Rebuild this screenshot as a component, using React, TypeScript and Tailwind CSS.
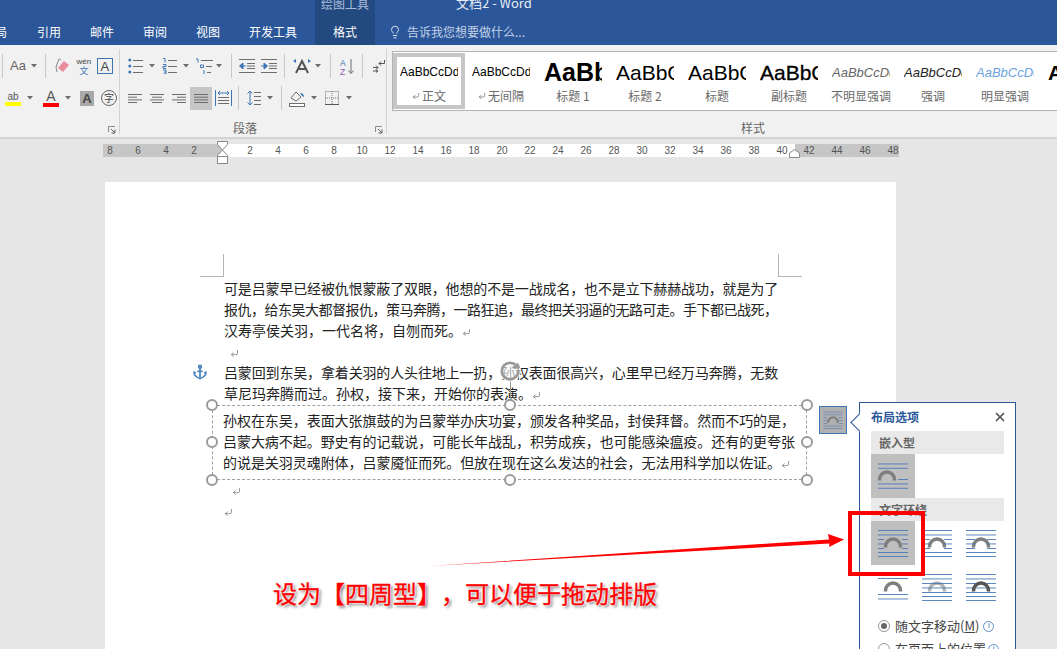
import { Anchor, CornerDownLeft, Lightbulb, RotateCw, X } from 'lucide-react'

const BLUE = '#3f75b5'
const GRAY = '#6d6d6d'

type Line = [number, number, number]

// horizontal-line glyphs: alignment, lists, indents
function Lines({ w, h = 16, lines, color = GRAY, className = '' }: { w: number; h?: number; lines: Line[]; color?: string; className?: string }) {
  return (
    <svg width={w} height={h} viewBox={`0 0 ${w} ${h}`} className={`shrink-0 ${className}`}>
      {lines.map(([a, b, y], i) => (
        <rect key={i} x={a} y={y} width={b - a} height={1} fill={color} />
      ))}
    </svg>
  )
}

function Caret({ className = '' }: { className?: string }) {
  return (
    <svg width="6" height="4" viewBox="0 0 6 4" className={`shrink-0 ${className}`}>
      <path d="M0 0h6L3 3.5z" fill={GRAY} />
    </svg>
  )
}

function Sep({ className = '' }: { className?: string }) {
  return <div className={`h-[24px] w-px shrink-0 bg-[#c8c8c8] ${className}`} />
}

function Launcher({ className = '' }: { className?: string }) {
  return (
    <svg width="8" height="8" viewBox="0 0 8 8" className={className}>
      <path d="M.5 6V.5H7" fill="none" stroke="#8a8a8a" />
      <path d="M3 3l3.5 3.5M7 3.5V7H3.5" fill="none" stroke="#5c5c5c" />
    </svg>
  )
}

function Bullets() {
  return (
    <svg width="16" height="16" viewBox="0 0 16 16" className="shrink-0">
      <circle cx="1.8" cy="2" r="1.5" fill={BLUE} />
      <circle cx="1.8" cy="8" r="1.5" fill={BLUE} />
      <circle cx="1.8" cy="14" r="1.5" fill={BLUE} />
      <path d="M5 2.500h10M5 8.500h10M5 14.500h10" stroke={GRAY} />
    </svg>
  )
}

function Numbers() {
  return (
    <svg width="16" height="16" viewBox="0 0 16 16" className="shrink-0">
      <path d="M1 .5h2v4M1 6.500h3v2H1v2h3M1 12h3v4H1M2 14h2" fill="none" stroke={BLUE} />
      <path d="M6 2.500h9M6 8.500h9M6 14.500h9" stroke={GRAY} />
    </svg>
  )
}

function Multilevel() {
  return (
    <svg width="18" height="16" viewBox="0 0 18 16" className="shrink-0">
      <path d="M1 1h2v3.500M5.500 7h3v2.500h-3V7M9 12v4" fill="none" stroke={BLUE} />
      <path d="M6 2.500h12M11 8.500h6M12 14.500h4" stroke={GRAY} />
    </svg>
  )
}

function Indent({ flip }: { flip?: boolean }) {
  return (
    <svg width="16" height="14" viewBox="0 0 16 14" className="shrink-0">
      <path d="M0 .5h16M0 13.500h16M8 4.500h8M8 7h8M8 9.500h8" stroke={GRAY} />
      {flip ? <path d="M0 7h5M3 4l3.500 3L3 10z" fill={BLUE} stroke={BLUE} /> : <path d="M1 7h6M4 4L.5 7 4 10z" fill={BLUE} stroke={BLUE} />}
    </svg>
  )
}

function AsianLayout() {
  return (
    <svg width="20" height="16" viewBox="0 0 20 16" className="shrink-0">
      <path d="M4 15L10 3l6 12M6 11h8" fill="none" stroke="#555" strokeWidth="2" />
      <path d="M1 3l3-2v4zM19 3l-3-2v4z" fill={BLUE} />
    </svg>
  )
}

function SortIcon() {
  return (
    <svg width="15" height="17" viewBox="0 0 15 17" className="shrink-0">
      <text x="0" y="7.500" fontSize="8.500" fill={BLUE} fontFamily="Liberation Sans">A</text>
      <text x="0" y="16.500" fontSize="8.500" fill="#8e5bb5" fontFamily="Liberation Sans">Z</text>
      <path d="M11 1v14M8.500 12.500L11 15.500l2.500-3" fill="none" stroke={GRAY} />
    </svg>
  )
}

function Direction() {
  return (
    <svg width="12" height="14" viewBox="0 0 12 14" className="shrink-0">
      <path d="M11.500 1v3.500H6M8 2.500L6 4.500l2 2M0 8.500h5M3 6.500l2 2-2 2M0 12h5M3 10.500l2 1.500-2 1.500" fill="none" stroke="#555" />
    </svg>
  )
}

function Distributed() {
  return (
    <svg width="17" height="16" viewBox="0 0 17 16" className="ml-[3px] shrink-0">
      <path d="M.5 0v16M16.500 0v16" stroke={BLUE} />
      <path d="M3 3h11M5 1L3 3l2 2M12 1l2 2-2 2" fill="none" stroke={BLUE} />
      <path d="M3 7.500h11M3 10.500h11M3 13.500h11" stroke={GRAY} />
    </svg>
  )
}

function LineSpacing() {
  return (
    <svg width="14" height="16" viewBox="0 0 14 16" className="shrink-0">
      <path d="M3 1v14M.5 3.500L3 1l2.500 2.500M.5 12.500L3 15l2.500-2.500" fill="none" stroke={BLUE} />
      <path d="M7 2.500h7M7 6.500h7M7 10.500h7M7 14.500h7" stroke={GRAY} />
    </svg>
  )
}

function Shading() {
  return (
    <svg width="17" height="17" viewBox="0 0 17 17" className="shrink-0">
      <path d="M2 8l5-6 5 5-5 4z" fill="none" stroke={GRAY} />
      <path d="M11 3c3 0 4 2 4 4l-2-1z" fill={BLUE} />
      <rect x="0.5" y="13.500" width="15" height="3" fill="#fff" stroke={GRAY} />
    </svg>
  )
}

function Borders() {
  return (
    <svg width="14" height="14" viewBox="0 0 14 14" className="shrink-0">
      <rect x=".5" y=".5" width="13" height="13" fill="none" stroke="#777" strokeDasharray="1 1" />
      <path d="M7 0v14M0 7h14" stroke="#777" strokeDasharray="1 1" />
      <path d="M0 13.500h14" stroke="#555" />
    </svg>
  )
}

function Eraser() {
  return (
    <svg width="15" height="16" viewBox="0 0 15 16" className="shrink-0">
      <path d="M2 14L1 9l3-8 2 1" fill="none" stroke="#888" />
      <path d="M3 10l6-7 5 4-6 7z" fill="#e98d9c" />
    </svg>
  )
}

type Wrap = 'inline' | 'square' | 'tight' | 'through' | 'topbottom' | 'behind' | 'front'

// one tile of the layout options: blue text lines and a gray arch
function WrapIcon({ kind, size = 44 }: { kind: Wrap; size?: number }) {
  const full: number[] = kind === 'topbottom' ? [13, 29, 33.5] : kind === 'inline' ? [9.5, 13.8, 29.5, 33.8] : kind === 'behind' || kind === 'front' ? [9, 13.5, 18, 22.5, 27, 31, 35] : [9, 13.5, 31, 35]
  const side: number[] = ['square', 'tight', 'through'].includes(kind) ? [18, 22.5, 27] : []
  const sideW = kind === 'square' ? 6 : kind === 'tight' ? 8 : 9
  const archColor = kind === 'behind' ? '#b3b3b3' : kind === 'front' ? '#555' : '#7f7f7f'
  const cx = kind === 'inline' ? 16 : 22
  const arch = <path d={`M${cx - 7.5} 26.500v-1a7.500 7.500 0 0 1 15 0v1`} fill="none" stroke={archColor} strokeWidth="3.500" />
  return (
    <svg width={size} height={size} viewBox="0 0 44 44" className="shrink-0">
      {kind !== 'front' && arch}
      {full.map((y) => (
        <rect key={y} x="7" y={y} width="30" height="0.9" fill="#4a7ab5" />
      ))}
      {side.map((y) => (
        <g key={y} fill="#4a7ab5">
          <rect x="7" y={y} width={sideW} height="0.9" />
          <rect x={37 - sideW} y={y} width={sideW} height="0.9" />
        </g>
      ))}
      {kind === 'inline' && <rect x="27" y="25" width="10" height="0.9" fill="#4a7ab5" />}
      {kind === 'front' && arch}
    </svg>
  )
}

function FontGroup() {
  return (
    <div className="flex w-[120px] shrink-0 flex-col border-r border-[#d2d2d2] pt-[4px]">
      <div className="flex h-[26px] items-center">
        <Sep className="ml-[2px]" />
        <span className="ml-[7px] font-['Liberation_Sans',sans-serif] text-[13px] text-[#666]">Aa</span>
        <Caret className="ml-[5px]" />
        <Sep className="ml-[8px]" />
        <div className="ml-[9px]"><Eraser /></div>
        <div className="ml-[6px] flex w-[16px] flex-col items-center leading-none">
          <span className="font-['Liberation_Sans',sans-serif] text-[8px] leading-[9px] text-[#444]">wén</span>
          <span className="text-[9px] leading-[9px] text-[#3f75b5]">文</span>
        </div>
        <div className="ml-[5px] flex h-[16px] w-[16px] items-center justify-center border border-[#3f75b5]"><span className="font-['Liberation_Sans',sans-serif] text-[13px] leading-none text-[#444]">A</span></div>
      </div>
      <div className="mt-[7px] flex h-[24px] items-center">
        <div className="ml-[5px] flex w-[16px] flex-col items-center">
          <span className="font-['Liberation_Sans',sans-serif] text-[10px] leading-[11px] text-[#555]">ab</span>
          <div className="h-[4px] w-[16px] bg-[#ffff00]" />
        </div>
        <Caret className="ml-[6px]" />
        <div className="ml-[10px] flex w-[16px] flex-col items-center">
          <span className="font-['Liberation_Sans',sans-serif] text-[14px] leading-[13px] text-[#555]">A</span>
          <div className="h-[4px] w-[16px] bg-[#ff0000]" />
        </div>
        <Caret className="ml-[6px]" />
        <div className="ml-[9px] flex h-[15px] w-[14px] items-center justify-center bg-[#a8a8a8]"><span className="font-['Liberation_Sans',sans-serif] text-[13px] font-bold leading-none text-[#444]">A</span></div>
        <div className="ml-[7px] flex h-[16px] w-[16px] items-center justify-center rounded-full border border-[#666] text-[10px] leading-none text-[#444]">字</div>
      </div>
      <div className="mt-auto flex justify-end pr-[3px]"><Launcher /></div>
    </div>
  )
}

function ParagraphGroup() {
  return (
    <div className="relative flex w-[267px] shrink-0 flex-col border-r border-[#d2d2d2] pt-[4px]">
      <div className="flex h-[26px] items-center">
        <div className="ml-[8px]"><Bullets /></div>
        <Caret className="ml-[5px]" />
        <div className="ml-[7px]"><Numbers /></div>
        <Caret className="ml-[5px]" />
        <div className="ml-[6px]"><Multilevel /></div>
        <Caret className="ml-[3px]" />
        <Sep className="ml-[9px]" />
        <div className="ml-[7px]"><Indent /></div>
        <div className="ml-[6px]"><Indent flip /></div>
        <Sep className="ml-[7px]" />
        <div className="ml-[7px]"><AsianLayout /></div>
        <Caret className="ml-[3px]" />
        <Sep className="ml-[9px]" />
        <div className="ml-[9px]"><SortIcon /></div>
        <Sep className="ml-[7px]" />
        <div className="ml-[10px]"><Direction /></div>
      </div>
      <div className="mt-[7px] flex h-[24px] items-center">
        <Lines className="ml-[8px]" w={14} h={9} lines={[[0, 14, 0], [0, 9, 2.7], [0, 14, 5.4], [0, 9, 8]]} />
        <Lines className="ml-[8px]" w={14} h={9} lines={[[0, 14, 0], [2, 12, 2.7], [0, 14, 5.4], [2, 12, 8]]} />
        <Lines className="ml-[8px]" w={14} h={9} lines={[[0, 14, 0], [5, 14, 2.7], [0, 14, 5.4], [5, 14, 8]]} />
        <div className="ml-[4px] flex h-[23px] w-[22px] items-center justify-center bg-[#c6c6c6]">
          <Lines w={14} h={9} lines={[[0, 14, 0], [0, 14, 2.7], [0, 14, 5.4], [0, 14, 8]]} />
        </div>
        <Distributed />
        <Sep className="ml-[6px]" />
        <div className="ml-[8px]"><LineSpacing /></div>
        <Caret className="ml-[6px]" />
        <Sep className="ml-[8px]" />
        <div className="ml-[7px]"><Shading /></div>
        <Caret className="ml-[5px]" />
        <div className="ml-[8px]"><Borders /></div>
        <Caret className="ml-[7px]" />
      </div>
      <div className="mt-auto flex items-end justify-between pl-[113px] pr-[3px]">
        <span className="-mb-[2px] text-[12px] leading-[16px] text-[#666]">段落</span>
        <Launcher />
      </div>
    </div>
  )
}

const styles = [
  { name: '正文', sample: 'AaBbCcDd', cls: 'text-[12px] text-black', mark: true, selected: true },
  { name: '无间隔', sample: 'AaBbCcDd', cls: 'text-[12px] text-black', mark: true },
  { name: '标题 1', sample: 'AaBb', cls: 'text-[25px] font-bold text-black' },
  { name: '标题 2', sample: 'AaBbC', cls: 'text-[21px] text-black' },
  { name: '标题', sample: 'AaBbC', cls: 'text-[21px] text-black' },
  { name: '副标题', sample: 'AaBbC', cls: 'text-[21px] text-black [-webkit-text-stroke:0.3px_black]' },
  { name: '不明显强调', sample: 'AaBbCcDd', cls: 'text-[13px] italic text-[#666]' },
  { name: '强调', sample: 'AaBbCcDd', cls: 'text-[13px] italic text-[#222]' },
  { name: '明显强调', sample: 'AaBbCcDd', cls: 'text-[13px] italic text-[#6ba3e0]' },
  { name: '', sample: 'AaBbC', cls: 'text-[21px] font-bold text-black' },
]

function StylesGroup() {
  return (
    <div className="flex min-w-0 flex-1 flex-col pl-[5px] pt-[2px]">
      <div className="flex h-[60px] overflow-hidden border-y border-l border-[#b4b4b4] bg-white pt-px">
        {styles.map((s, i) => (
          <div key={i} className={`flex h-[56px] w-[72px] shrink-0 flex-col items-center border-4 ${s.selected ? 'border-[#c6c6c6]' : 'border-transparent'}`}>
            <div className="flex h-[30px] w-[58px] items-center justify-start overflow-hidden">
              <span className={`whitespace-nowrap font-['Liberation_Sans',sans-serif] leading-none ${s.cls}`}>{s.sample}</span>
            </div>
            <div className="mt-[1px] flex h-[16px] items-center gap-[2px] whitespace-nowrap text-[12px] leading-none text-[#6a6a6a]">
              {s.mark && <CornerDownLeft size={8} color="#666" />}
              {s.name}
            </div>
          </div>
        ))}
      </div>
      <div className="-mb-[2px] mt-auto pl-[349px] text-[12px] leading-[16px] text-[#666]">样式</div>
    </div>
  )
}

function Ruler() {
  const left = [8, 6, 4, 2]
  const mid = Array.from({ length: 20 }, (_, i) => (i + 1) * 2)
  const right = [42, 44, 46, 48]
  const cell = 'w-[28px] shrink-0 text-center'
  return (
    <div className="flex h-[13px] pl-[103px] font-['Liberation_Sans',sans-serif] text-[10px] leading-[13px] text-[#555]">
      <div className="flex w-[119px] shrink-0 justify-end bg-[#c6c6c6] pr-[14px]">
        {left.map((n) => <span key={n} className={cell}>{n}</span>)}
      </div>
      <div className="relative flex w-[573px] shrink-0 bg-white pl-[14px]">
        {mid.map((n) => <span key={n} className={cell}>{n}</span>)}
        <svg width="13" height="25" viewBox="0 0 13 25" className="absolute -left-[6px] -top-[3px]">
          <path d="M1.500.5h10v3L6.500 9l-5-5.500z" fill="#fff" stroke="#888" />
          <path d="M6.500 9l5 5.500v1h-10v-1z" fill="#fff" stroke="#888" />
          <rect x="1.500" y="15.500" width="10" height="7" fill="#fff" stroke="#888" />
        </svg>
        <svg width="11" height="9" viewBox="0 0 11 9" className="absolute -right-[5px] top-[5px]">
          <path d="M.5 8.500V4l5-3.500 5 3.500v4.500z" fill="#fff" stroke="#888" />
        </svg>
      </div>
      <div className="flex w-[104px] shrink-0 bg-[#c6c6c6]">
        {right.map((n) => <span key={n} className={cell}>{n}</span>)}
      </div>
    </div>
  )
}

function Mark({ className = '' }: { className?: string }) {
  return <CornerDownLeft size={9} color="#777" className={`inline-block ${className}`} />
}

function Handle({ className }: { className: string }) {
  return <div className={`absolute h-[12px] w-[12px] rounded-full border-2 border-[#9a9a9a] bg-white ${className}`} />
}

function LayoutPanel() {
  return (
    <div className="absolute left-[859px] top-[402px] h-[260px] w-[157px] border border-[#2b579a] bg-white pl-[11px] pr-[11px]">
      {/* pointer towards the layout button */}
      <div className="absolute -left-[7px] top-[13px] h-[13px] w-[13px] rotate-45 border-b border-l border-[#2b579a] bg-white" />
      <div className="relative flex h-[28px] items-center justify-between">
        <span className="text-[12px] font-bold text-[#2b579a]">布局选项</span>
        <X size={14} strokeWidth={3} color="#555" className="-mr-[3px]" />
      </div>
      <div className="flex h-[23px] items-center bg-[#e9e9e9] pl-[8px] text-[12px] font-bold text-[#666]">嵌入型</div>
      <div className="h-[44px] w-[44px] bg-[#bfbfbf]"><WrapIcon kind="inline" /></div>
      <div className="flex h-[23px] items-center bg-[#e9e9e9] pl-[8px] text-[12px] font-bold text-[#666]">文字环绕</div>
      <div className="flex w-[132px] flex-wrap">
        <div className="bg-[#bfbfbf]"><WrapIcon kind="square" /></div>
        <WrapIcon kind="tight" />
        <WrapIcon kind="through" />
        <WrapIcon kind="topbottom" />
        <WrapIcon kind="behind" />
        <WrapIcon kind="front" />
      </div>
      <div className="mt-[8px] flex h-[18px] items-center pl-[7px] text-[13px] text-[#444]">
        <span className="flex h-[12px] w-[12px] items-center justify-center rounded-full border border-[#999]"><span className="h-[6px] w-[6px] rounded-full bg-[#666]" /></span>
        <span className="ml-[5px]">随文字移动(<span className="underline">M</span>)</span>
        <span className="ml-[4px] flex h-[11px] w-[11px] items-center justify-center rounded-full border border-[#5b8fd0] font-['Liberation_Sans',sans-serif] text-[8px] leading-none text-[#3f75b5]">i</span>
      </div>
      <div className="mt-[5px] flex h-[18px] items-center pl-[7px] text-[13px] text-[#444]">
        <span className="h-[12px] w-[12px] rounded-full border border-[#999]" />
        <span className="ml-[5px] whitespace-nowrap">在页面上的位置</span>
        <span className="ml-[2px] flex h-[11px] w-[11px] items-center justify-center rounded-full border border-[#5b8fd0] font-['Liberation_Sans',sans-serif] text-[8px] leading-none text-[#3f75b5]">i</span>
      </div>
    </div>
  )
}

export default function App() {
  return (
    <div className="relative h-[649px] w-[1057px] overflow-hidden bg-[#e6e6e6] font-['Noto_Sans_CJK_SC',sans-serif]">
      {/* title bar and tabs */}
      <div className="flex h-[45px] bg-[#2b579a] text-[12px] text-white">
        <div className="flex w-[315px] shrink-0 items-end pb-[4px]">
          <span className="-ml-[5px] w-[42px] leading-[18px]">局</span>
          <span className="w-[53px] leading-[18px]">引用</span>
          <span className="w-[53px] leading-[18px]">邮件</span>
          <span className="w-[53px] leading-[18px]">审阅</span>
          <span className="w-[53px] leading-[18px]">视图</span>
          <span className="leading-[18px]">开发工具</span>
        </div>
        <div className="flex w-[60px] shrink-0 flex-col items-center overflow-hidden bg-[#234a80]">
          <div className="h-[23px] overflow-hidden">
            <div className="-mt-[5px] leading-[18px] text-[#a9bcd8]">绘图工具</div>
          </div>
          <div className="leading-[18px]">格式</div>
        </div>
        <div className="flex min-w-0 flex-1 flex-col">
          <div className="h-[23px] overflow-hidden pl-[81px]">
            <div className="-mt-[6px] whitespace-nowrap text-[13px] leading-[18px] text-[#e6ecf5]">文档2 - Word</div>
          </div>
          <div className="flex items-center pl-[13px] text-[#c3d1e6]">
            <Lightbulb size={14} strokeWidth={1.5} color="#e8eef7" />
            <span className="ml-[5px] leading-[18px]">告诉我您想要做什么...</span>
          </div>
        </div>
      </div>

      {/* ribbon */}
      <div className="flex h-[94px] border-b-2 border-[#d4d4d4] bg-[#f1f1f1] pb-[3px] pt-[4px]">
        <FontGroup />
        <ParagraphGroup />
        <StylesGroup />
      </div>

      <div className="pt-[5px]"><Ruler /></div>

      {/* page */}
      <div className="ml-[105px] mt-[25px] h-[480px] w-[791px] bg-white pt-[72px] text-[14px] leading-[21px] text-[#222]">
        <div className="ml-[95px] flex h-[23px] w-[602px] justify-between">
          <div className="h-[23px] w-[24px] border-b border-r border-[#b5b5b5]" />
          <div className="h-[23px] w-[24px] border-b border-l border-[#b5b5b5]" />
        </div>
        <div className="relative ml-[119px] w-[580px] pt-px">
          <div className="tracking-[-0.15px]">可是吕蒙早已经被仇恨蒙蔽了双眼，他想的不是一战成名，也不是立下赫赫战功，就是为了</div>
          <div className="tracking-[-0.5px]">报仇，给东吴大都督报仇，策马奔腾，一路狂追，最终把关羽逼的无路可走。手下都已战死，</div>
          <div>汉寿亭侯关羽，一代名将，自刎而死。<Mark /></div>
          <div className="pl-[6px]"><Mark /></div>
          <div className="relative tracking-[-0.15px]">
            <Anchor size={16} color="#4a7fc0" strokeWidth={2.5} className="absolute -left-[32px] top-[2px]" />
            吕蒙回到东吴，拿着关羽的人头往地上一扔，孙权表面很高兴，心里早已经万马奔腾，无数
          </div>
          <div>草尼玛奔腾而过。孙权，接下来，开始你的表演。<Mark /></div>
        </div>

        {/* selected text box */}
        <div className="relative ml-[107px] mt-px h-[75px] w-[595px] border border-dashed border-[#a0a0a0] pl-[10px] pt-[4px]">
          <div className="whitespace-nowrap tracking-[-0.05px]">孙权在东吴，表面大张旗鼓的为吕蒙举办庆功宴，颁发各种奖品，封侯拜督。然而不巧的是，</div>
          <div className="whitespace-nowrap tracking-[-0.05px]">吕蒙大病不起。野史有的记载说，可能长年战乱，积劳成疾，也可能感染瘟疫。还有的更夸张</div>
          <div className="whitespace-nowrap tracking-[-0.05px]">的说是关羽灵魂附体，吕蒙魇怔而死。但放在现在这么发达的社会，无法用科学加以佐证。<Mark /></div>
          <div className="absolute -top-[28px] left-[297px] h-[28px] w-px bg-[#9a9a9a]" />
          <RotateCw size={22} strokeWidth={3} color="#9a9a9a" className="absolute -top-[46px] left-[286px] rounded-full bg-white/60" />
          <Handle className="-left-[7px] -top-[7px]" />
          <Handle className="-top-[7px] left-[291px]" />
          <Handle className="-right-[7px] -top-[7px]" />
          <Handle className="-left-[7px] top-[30px]" />
          <Handle className="-right-[7px] top-[30px]" />
          <Handle className="-bottom-[7px] -left-[7px]" />
          <Handle className="-bottom-[7px] left-[291px]" />
          <Handle className="-bottom-[7px] -right-[7px]" />
          {/* layout options button */}
          <div className="absolute -right-[41px] top-0 h-[28px] w-[28px] overflow-hidden border border-[#3f75b5] bg-[#b0b0b0]">
            <div className="-ml-[1px] -mt-[1px]"><WrapIcon kind="square" size={28} /></div>
          </div>
        </div>
        <div className="-mt-[1px] ml-[127px]"><Mark /></div>
        <div className="ml-[119px]"><Mark /></div>
      </div>

      <LayoutPanel />

      {/* red annotation drawn on top of the screenshot */}
      <div className="absolute left-[848px] top-[511px] h-[65px] w-[77px] border-4 border-[#ff0000]" />
      <svg width="1057" height="649" viewBox="0 0 1057 649" className="pointer-events-none absolute left-0 top-0">
        <path d="M430 566L829 539.500 828 534 844 539.500 829 547 829.500 543.500z" fill="#ff0000" />
      </svg>
      <div className="absolute left-[273px] top-[575px] whitespace-nowrap text-[24px] leading-[36px] text-[#ff0000] [-webkit-text-stroke:0.3px_#ff0000] [text-shadow:0_0_2px_#fff,0_0_2px_#fff,2px_2px_3px_#777] [text-spacing-trim:space-all]">设为【四周型】，可以便于拖动排版</div>
    </div>
  )
}
